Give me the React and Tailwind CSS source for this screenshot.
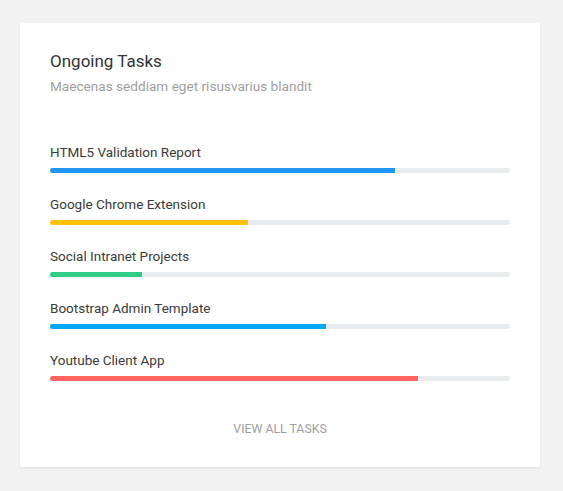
export default function App() {
  const tasks = [
    { name: "HTML5 Validation Report", pct: 75, color: "bg-[#2196f3]" },
    { name: "Google Chrome Extension", pct: 43, color: "bg-[#ffc107]" },
    { name: "Social Intranet Projects", pct: 20, color: "bg-[#2ecc86]" },
    { name: "Bootstrap Admin Template", pct: 60, color: "bg-[#03a9f4]" },
    { name: "Youtube Client App", pct: 80, color: "bg-[#ff6461]" },
  ];
  return (
    <div className="min-h-[491px] w-full bg-[#f2f2f2] pt-[23px] pl-[20px] font-['Roboto',sans-serif]">
      <div className="w-[520px] h-[444px] bg-white rounded-[2px] shadow-[0_1px_2px_rgba(0,0,0,0.08)] px-[30px] pt-[26px]">
        <h2 className="text-[17px] leading-[24px] text-[#333333] font-normal">Ongoing Tasks</h2>
        <p className="mt-[3px] text-[13.6px] leading-[20px] text-[#9e9e9e]">Maecenas seddiam eget risusvarius blandit</p>
        <div className="mt-[46px] flex flex-col gap-[21px]">
          {tasks.map((t) => (
            <div key={t.name}>
              <div className="text-[13.5px] leading-[20px] text-[#3a3a3a]">{t.name}</div>
              <div className="mt-[6px] h-[5px] w-[460px] rounded-full bg-[#e9ecef] overflow-hidden">
                <div className={`h-full ${t.color}`} style={{ width: `${t.pct}%` }} />
              </div>
            </div>
          ))}
        </div>
        <div className="mt-[39px] text-center text-[12.3px] leading-[18px] text-[#9e9e9e] uppercase">View all tasks</div>
      </div>
    </div>
  );
}
